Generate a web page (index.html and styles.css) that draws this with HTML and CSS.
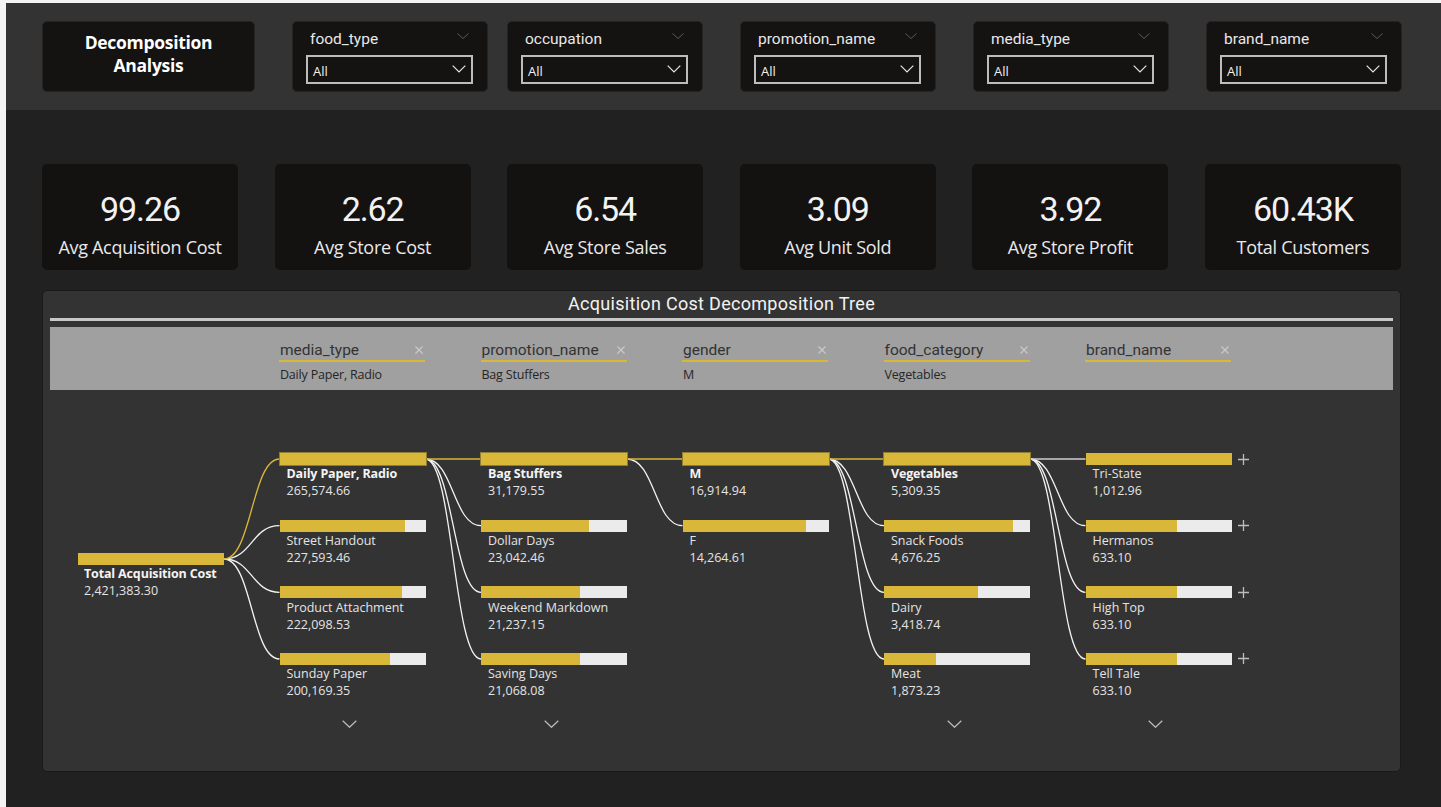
FILE: index.html
```html
<!DOCTYPE html>
<html lang="en">
<head>
<meta charset="utf-8">
<title>Decomposition Analysis</title>
<link rel="stylesheet" href="styles.css">
</head>
<body>
<div class="app">
  <header class="topbar">
    <div class="title-card"><span>Decomposition<br>Analysis</span></div>
    <div class="slicer">
      <div class="slicer-head"><span>food_type</span><svg class="head-chev" width="12" height="6" viewBox="0 0 12 6"><polyline points="0.5,0.5 6,5.5 11.5,0.5"/></svg></div>
      <div class="dropdown"><span>All</span><svg class="dd-chev" width="14" height="8" viewBox="0 0 14 8"><polyline points="0.7,0.7 7,7 13.3,0.7"/></svg></div>
    </div>
    <div class="slicer tight">
      <div class="slicer-head"><span>occupation</span><svg class="head-chev" width="12" height="6" viewBox="0 0 12 6"><polyline points="0.5,0.5 6,5.5 11.5,0.5"/></svg></div>
      <div class="dropdown"><span>All</span><svg class="dd-chev" width="14" height="8" viewBox="0 0 14 8"><polyline points="0.7,0.7 7,7 13.3,0.7"/></svg></div>
    </div>
    <div class="slicer">
      <div class="slicer-head"><span>promotion_name</span><svg class="head-chev" width="12" height="6" viewBox="0 0 12 6"><polyline points="0.5,0.5 6,5.5 11.5,0.5"/></svg></div>
      <div class="dropdown"><span>All</span><svg class="dd-chev" width="14" height="8" viewBox="0 0 14 8"><polyline points="0.7,0.7 7,7 13.3,0.7"/></svg></div>
    </div>
    <div class="slicer">
      <div class="slicer-head"><span>media_type</span><svg class="head-chev" width="12" height="6" viewBox="0 0 12 6"><polyline points="0.5,0.5 6,5.5 11.5,0.5"/></svg></div>
      <div class="dropdown"><span>All</span><svg class="dd-chev" width="14" height="8" viewBox="0 0 14 8"><polyline points="0.7,0.7 7,7 13.3,0.7"/></svg></div>
    </div>
    <div class="slicer">
      <div class="slicer-head"><span>brand_name</span><svg class="head-chev" width="12" height="6" viewBox="0 0 12 6"><polyline points="0.5,0.5 6,5.5 11.5,0.5"/></svg></div>
      <div class="dropdown"><span>All</span><svg class="dd-chev" width="14" height="8" viewBox="0 0 14 8"><polyline points="0.7,0.7 7,7 13.3,0.7"/></svg></div>
    </div>
  </header>

  <section class="kpis">
    <div class="kpi"><div class="kpi-value">99.26</div><div class="kpi-label">Avg Acquisition Cost</div></div>
    <div class="kpi"><div class="kpi-value">2.62</div><div class="kpi-label">Avg Store Cost</div></div>
    <div class="kpi"><div class="kpi-value">6.54</div><div class="kpi-label">Avg Store Sales</div></div>
    <div class="kpi"><div class="kpi-value">3.09</div><div class="kpi-label">Avg Unit Sold</div></div>
    <div class="kpi"><div class="kpi-value">3.92</div><div class="kpi-label">Avg Store Profit</div></div>
    <div class="kpi"><div class="kpi-value">60.43K</div><div class="kpi-label">Total Customers</div></div>
  </section>

  <section class="panel">
    <div class="panel-title">Acquisition Cost Decomposition Tree</div>
    <div class="panel-rule"></div>
    <div class="band">
      <div class="band-item"><div class="band-head"><span>media_type</span><svg class="band-x" width="8" height="8" viewBox="0 0 8 8"><path d="M0.5 0.5 L7.5 7.5 M7.5 0.5 L0.5 7.5"/></svg></div><div class="band-line"></div><div class="band-val">Daily Paper, Radio</div></div>
      <div class="band-item"><div class="band-head"><span>promotion_name</span><svg class="band-x" width="8" height="8" viewBox="0 0 8 8"><path d="M0.5 0.5 L7.5 7.5 M7.5 0.5 L0.5 7.5"/></svg></div><div class="band-line"></div><div class="band-val">Bag Stuffers</div></div>
      <div class="band-item"><div class="band-head"><span>gender</span><svg class="band-x" width="8" height="8" viewBox="0 0 8 8"><path d="M0.5 0.5 L7.5 7.5 M7.5 0.5 L0.5 7.5"/></svg></div><div class="band-line"></div><div class="band-val">M</div></div>
      <div class="band-item"><div class="band-head"><span>food_category</span><svg class="band-x" width="8" height="8" viewBox="0 0 8 8"><path d="M0.5 0.5 L7.5 7.5 M7.5 0.5 L0.5 7.5"/></svg></div><div class="band-line"></div><div class="band-val">Vegetables</div></div>
      <div class="band-item"><div class="band-head"><span>brand_name</span><svg class="band-x" width="8" height="8" viewBox="0 0 8 8"><path d="M0.5 0.5 L7.5 7.5 M7.5 0.5 L0.5 7.5"/></svg></div><div class="band-line"></div><div class="band-val"></div></div>
    </div>

    <div class="tree">
      <svg class="links" width="1343" height="380" viewBox="0 0 1343 380">
        <g class="link-white">
          <path d="M174 169 C201.75 169 201.75 135.67 229.5 135.67"/>
          <path d="M174 169 C201.75 169 201.75 202.33 229.5 202.33"/>
          <path d="M174 169 C201.75 169 201.75 269 229.5 269"/>
          <path d="M375.5 69 C403.25 69 403.25 135.67 431 135.67"/>
          <path d="M375.5 69 C403.25 69 403.25 202.33 431 202.33"/>
          <path d="M375.5 69 C403.25 69 403.25 269 431 269"/>
          <path d="M577 69 C604.75 69 604.75 135.67 632.5 135.67"/>
          <path d="M778.5 69 C806.25 69 806.25 135.67 834 135.67"/>
          <path d="M778.5 69 C806.25 69 806.25 202.33 834 202.33"/>
          <path d="M778.5 69 C806.25 69 806.25 269 834 269"/>
          <path d="M980 69 C1007.75 69 1007.75 135.67 1035.5 135.67"/>
          <path d="M980 69 C1007.75 69 1007.75 202.33 1035.5 202.33"/>
          <path d="M980 69 C1007.75 69 1007.75 269 1035.5 269"/>
        </g>
        <path class="link-gray" d="M980 69 L1035.5 69"/>
        <g class="link-yellow">
          <path d="M174 169 C201.75 169 201.75 69 229.5 69"/>
          <path d="M375.5 69 L431 69"/>
          <path d="M577 69 L632.5 69"/>
          <path d="M778.5 69 L834 69"/>
        </g>
      </svg>

      <div class="col root">
        <div class="node">
          <div class="node-bar"><div class="bar"><div class="fill" style="width:100%"></div></div></div>
          <div class="node-name strong">Total Acquisition Cost</div><div class="node-val">2,421,383.30</div>
        </div>
      </div>

      <div class="col">
        <div class="node"><div class="node-bar"><div class="bar sel"><div class="fill" style="width:100%"></div></div></div><div class="node-name strong">Daily Paper, Radio</div><div class="node-val">265,574.66</div></div>
        <div class="node"><div class="node-bar"><div class="bar"><div class="fill" style="width:85.7%"></div></div></div><div class="node-name">Street Handout</div><div class="node-val">227,593.46</div></div>
        <div class="node"><div class="node-bar"><div class="bar"><div class="fill" style="width:83.6%"></div></div></div><div class="node-name">Product Attachment</div><div class="node-val">222,098.53</div></div>
        <div class="node"><div class="node-bar"><div class="bar"><div class="fill" style="width:75.4%"></div></div></div><div class="node-name">Sunday Paper</div><div class="node-val">200,169.35</div></div>
        <div class="more"><svg width="15" height="8" viewBox="0 0 15 8"><polyline points="0.7,0.7 7.5,7.3 14.3,0.7"/></svg></div>
      </div>

      <div class="col">
        <div class="node"><div class="node-bar"><div class="bar sel"><div class="fill" style="width:100%"></div></div></div><div class="node-name strong">Bag Stuffers</div><div class="node-val">31,179.55</div></div>
        <div class="node"><div class="node-bar"><div class="bar"><div class="fill" style="width:73.9%"></div></div></div><div class="node-name">Dollar Days</div><div class="node-val">23,042.46</div></div>
        <div class="node"><div class="node-bar"><div class="bar"><div class="fill" style="width:68.1%"></div></div></div><div class="node-name">Weekend Markdown</div><div class="node-val">21,237.15</div></div>
        <div class="node"><div class="node-bar"><div class="bar"><div class="fill" style="width:67.6%"></div></div></div><div class="node-name">Saving Days</div><div class="node-val">21,068.08</div></div>
        <div class="more"><svg width="15" height="8" viewBox="0 0 15 8"><polyline points="0.7,0.7 7.5,7.3 14.3,0.7"/></svg></div>
      </div>

      <div class="col">
        <div class="node"><div class="node-bar"><div class="bar sel"><div class="fill" style="width:100%"></div></div></div><div class="node-name strong">M</div><div class="node-val">16,914.94</div></div>
        <div class="node"><div class="node-bar"><div class="bar"><div class="fill" style="width:84.3%"></div></div></div><div class="node-name">F</div><div class="node-val">14,264.61</div></div>
      </div>

      <div class="col">
        <div class="node"><div class="node-bar"><div class="bar sel"><div class="fill" style="width:100%"></div></div></div><div class="node-name strong">Vegetables</div><div class="node-val">5,309.35</div></div>
        <div class="node"><div class="node-bar"><div class="bar"><div class="fill" style="width:88.1%"></div></div></div><div class="node-name">Snack Foods</div><div class="node-val">4,676.25</div></div>
        <div class="node"><div class="node-bar"><div class="bar"><div class="fill" style="width:64.4%"></div></div></div><div class="node-name">Dairy</div><div class="node-val">3,418.74</div></div>
        <div class="node"><div class="node-bar"><div class="bar"><div class="fill" style="width:35.3%"></div></div></div><div class="node-name">Meat</div><div class="node-val">1,873.23</div></div>
        <div class="more"><svg width="15" height="8" viewBox="0 0 15 8"><polyline points="0.7,0.7 7.5,7.3 14.3,0.7"/></svg></div>
      </div>

      <div class="col">
        <div class="node"><div class="node-bar"><div class="bar"><div class="fill" style="width:100%"></div></div><svg class="plus" width="11" height="11" viewBox="0 0 11 11"><path d="M5.5 0 V11 M0 5.5 H11"/></svg></div><div class="node-name">Tri-State</div><div class="node-val">1,012.96</div></div>
        <div class="node"><div class="node-bar"><div class="bar"><div class="fill" style="width:62.5%"></div></div><svg class="plus" width="11" height="11" viewBox="0 0 11 11"><path d="M5.5 0 V11 M0 5.5 H11"/></svg></div><div class="node-name">Hermanos</div><div class="node-val">633.10</div></div>
        <div class="node"><div class="node-bar"><div class="bar"><div class="fill" style="width:62.5%"></div></div><svg class="plus" width="11" height="11" viewBox="0 0 11 11"><path d="M5.5 0 V11 M0 5.5 H11"/></svg></div><div class="node-name">High Top</div><div class="node-val">633.10</div></div>
        <div class="node"><div class="node-bar"><div class="bar"><div class="fill" style="width:62.5%"></div></div><svg class="plus" width="11" height="11" viewBox="0 0 11 11"><path d="M5.5 0 V11 M0 5.5 H11"/></svg></div><div class="node-name">Tell Tale</div><div class="node-val">633.10</div></div>
        <div class="more"><svg width="15" height="8" viewBox="0 0 15 8"><polyline points="0.7,0.7 7.5,7.3 14.3,0.7"/></svg></div>
      </div>
    </div>
  </section>
</div>
</body>
</html>
```

FILE: styles.css
```css
* { box-sizing: border-box; }

html, body {
  margin: 0;
}

body {
  width: 1441px;
  height: 807px;
  padding: 3px 0 0 6px;
  background: #f4f4f4;
  overflow: hidden;
  font-family: "Open Sans", "Noto Sans", sans-serif;
}

.app {
  width: 1435px;
  height: 804px;
  background: #212121;
}

/* ---------- top bar ---------- */
.topbar {
  height: 107px;
  background: #333333;
  padding: 18px 0 0 36px;
  display: flex;
  gap: 37px;
}

.title-card {
  width: 213px;
  height: 71px;
  background: #151212;
  border: 1px solid #262323;
  border-radius: 5px;
  display: flex;
  align-items: center;
  justify-content: center;
  padding-bottom: 5px;
  text-align: center;
  color: #ffffff;
  font-family: "Open Sans", sans-serif;
  font-weight: 700;
  font-size: 17.5px;
  line-height: 23px;
  letter-spacing: -0.3px;
}

.slicer {
  width: 196px;
  height: 71px;
  background: #151212;
  border: 1px solid #262323;
  border-radius: 5px;
  padding: 5px 14px 0 13px;
}

.slicer.tight {
  margin-left: -18px;
}

.slicer-head {
  height: 24px;
  display: flex;
  align-items: center;
  justify-content: space-between;
  padding: 0 4px 0 4px;
  font-family: Roboto, "DejaVu Sans", sans-serif;
  font-size: 15.5px;
  color: #e8e8e8;
}

.head-chev {
  margin-top: -6px;
}

.head-chev polyline {
  fill: none;
  stroke: #5c5a5a;
  stroke-width: 1;
}

.dropdown {
  margin-top: 4px;
  height: 29px;
  border: 2px solid #bdbdbd;
  display: flex;
  align-items: center;
  justify-content: space-between;
  padding: 3px 5px 0 5px;
  font-family: "Open Sans", sans-serif;
  font-size: 13px;
  color: #f0f0f0;
}

.dd-chev {
  margin-top: -4px;
}

.dd-chev polyline {
  fill: none;
  stroke: #e6e6e6;
  stroke-width: 1.2;
}

/* ---------- KPI cards ---------- */
.kpis {
  margin: 54px 0 0 36px;
  width: 1359px;
  display: grid;
  grid-template-columns: repeat(6, 1fr);
  column-gap: 36.6px;
}

.kpi {
  height: 106px;
  background: #141111;
  border-radius: 5px;
  padding-top: 25px;
  text-align: center;
}

.kpi-value {
  font-family: Roboto, "DejaVu Sans", sans-serif;
  font-size: 34px;
  line-height: 40px;
  color: #f2f2f2;
  letter-spacing: -1.1px;
}

.kpi-label {
  margin-top: 6px;
  font-size: 18px;
  line-height: 24px;
  color: #e9e9e9;
  letter-spacing: -0.3px;
}

/* ---------- decomposition panel ---------- */
.panel {
  margin: 20px 0 0 36px;
  width: 1359px;
  height: 482px;
  background: #333333;
  border: 1px solid #1a1a1a;
  border-radius: 5px;
  padding: 0 7px;
  display: flex;
  flex-direction: column;
}

.panel-title {
  height: 25px;
  line-height: 25px;
  text-align: center;
  font-family: Roboto, "DejaVu Sans", sans-serif;
  font-size: 18px;
  letter-spacing: 0.3px;
  color: #f2f2f2;
}

.panel-rule {
  margin-top: 2px;
  height: 3px;
  background: #c8c8c8;
}

.band {
  margin-top: 6px;
  height: 63px;
  background: #a0a0a0;
  padding: 13px 0 0 229px;
  display: flex;
  gap: 55.5px;
}

.band-item {
  width: 146px;
  flex-shrink: 0;
}

.band-head {
  height: 20px;
  display: flex;
  align-items: center;
  justify-content: space-between;
  padding: 0 2px 0 1px;
  font-family: Roboto, "DejaVu Sans", sans-serif;
  font-size: 15.5px;
  color: #333333;
}

.band-x path {
  stroke: #c9c9c9;
  stroke-width: 1.2;
  fill: none;
}

.band-line {
  height: 2px;
  background: #d9b739;
}

.band-val {
  margin-top: 5px;
  height: 16px;
  line-height: 16px;
  padding-left: 1px;
  font-size: 12.5px;
  color: #262626;
  letter-spacing: -0.2px;
}

.tree {
  position: relative;
  flex: 1;
  padding: 63px 0 0 28px;
  display: flex;
  align-items: flex-start;
  gap: 55.5px;
}

.links {
  position: absolute;
  left: 0;
  top: 0;
  pointer-events: none;
}

.links path {
  fill: none;
  stroke-width: 1.3;
}

.link-white path {
  stroke: #f2f2f2;
}

.link-gray {
  stroke: #cfcfcf;
}

.link-yellow path {
  stroke: #d9b739;
}

.col {
  width: 146px;
  flex-shrink: 0;
  position: relative;
}

.col.root {
  height: 266.67px;
  display: flex;
  flex-direction: column;
  justify-content: center;
}

.node {
  height: 66.67px;
}

.node-bar {
  height: 12px;
  display: flex;
  align-items: center;
}

.bar {
  width: 146px;
  height: 12px;
  flex-shrink: 0;
  background: #ebebeb;
}

.bar.sel {
  outline: 1px solid #8f7d34;
}

.fill {
  height: 100%;
  background: #d9b739;
}

.plus {
  flex-shrink: 0;
  margin-left: 6px;
}

.plus path {
  stroke: #bdbdbd;
  stroke-width: 1.3;
}

.node-name,
.node-val {
  padding-left: 7px;
  font-size: 12.5px;
  line-height: 17.2px;
  height: 17.2px;
  color: #e4e4e4;
  letter-spacing: 0;
  white-space: nowrap;
}

.node-name {
  margin-top: 0.3px;
}

.node-name.strong {
  color: #f4f4f4;
  font-weight: 700;
  letter-spacing: -0.15px;
}

.root .node-name,
.root .node-val {
  padding-left: 6px;
}

.more {
  height: 10px;
  display: flex;
  justify-content: center;
  padding-right: 6px;
}

.more polyline {
  fill: none;
  stroke: #bdbdbd;
  stroke-width: 1.2;
}
```
